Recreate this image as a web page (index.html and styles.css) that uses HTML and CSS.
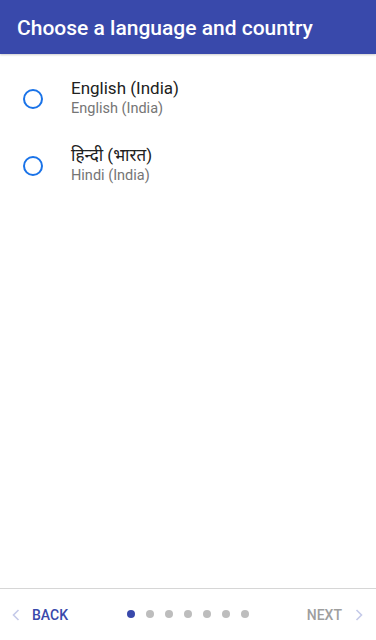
FILE: index.html
```html
<!DOCTYPE html>
<html>
	<head>
		<meta charset="utf-8">
		<title>Choose a language and country</title>
		<link rel="stylesheet" href="styles.css">
	</head>
	<body>
		<div class="page">
			<div class="header">Choose a language and country</div>
			<ul class="langList">
				<li>
					<span class="radio"></span>
					<div class="texts">
						<p class="name">English (India)</p>
						<p class="sub">English (India)</p>
					</div>
				</li>
				<li>
					<span class="radio"></span>
					<div class="texts">
						<p class="name">हिन्दी (भारत)</p>
						<p class="sub">Hindi (India)</p>
					</div>
				</li>
			</ul>
			<div class="footer">
				<a class="back">
					<svg width="8" height="12" viewBox="0 0 8 12"><path d="M6.5 1 L1.5 6 L6.5 11" fill="none" stroke="#c5cae9" stroke-width="1.6"/></svg>
					<span>BACK</span>
				</a>
				<ul class="dots">
					<li class="on"></li>
					<li></li>
					<li></li>
					<li></li>
					<li></li>
					<li></li>
					<li></li>
				</ul>
				<a class="next">
					<span>NEXT</span>
					<svg width="8" height="12" viewBox="0 0 8 12"><path d="M1.5 1 L6.5 6 L1.5 11" fill="none" stroke="#c5cae9" stroke-width="1.6"/></svg>
				</a>
			</div>
		</div>
	</body>
</html>
```

FILE: styles.css
```css
*{
	padding: 0;
	margin: 0;
	box-sizing: border-box;
}
ul,li{
	list-style: none;
}
body{
	font-family: Roboto, "Noto Sans", "Noto Sans Devanagari", "Lohit Devanagari", sans-serif;
	background-color: #fff;
}
.page{
	width: 376px;
	height: 640px;
	display: flex;
	flex-direction: column;
}
.header{
	height: 54px;
	background-color: #3949ab;
	color: #fff;
	font-size: 21px;
	font-weight: 500;
	padding: 14px 0 0 17px;
	line-height: 28px;
	box-shadow: 0 1px 2px rgba(0,0,0,.2);
}
.langList{
	flex: 1;
	padding-top: 11px;
}
.langList li{
	display: flex;
	align-items: center;
	height: 67px;
}
.langList .radio{
	width: 20px;
	height: 20px;
	border: 2px solid #1a73e8;
	border-radius: 50%;
	margin: 0 28px 0 23px;
}
.langList .name{
	font-size: 17px;
	line-height: 21px;
	color: #212121;
}
.langList .sub{
	font-size: 14.5px;
	line-height: 20px;
	color: #757575;
}
.footer{
	height: 52px;
	border-top: 1px solid #d6d6d6;
	display: flex;
	align-items: center;
	position: relative;
	font-size: 14px;
	font-weight: 500;
}
.footer a{
	display: flex;
	align-items: center;
}
.footer .back{
	padding-left: 12px;
	color: #3949ab;
	gap: 12px;
}
.footer .next{
	margin-left: auto;
	padding-right: 13px;
	color: #9e9e9e;
	gap: 13px;
}
.dots{
	position: absolute;
	left: 127px;
	top: 21px;
	display: flex;
	gap: 11px;
}
.dots li{
	width: 8px;
	height: 8px;
	border-radius: 50%;
	background-color: #bdbdbd;
}
.dots li.on{
	background-color: #3949ab;
}
```
